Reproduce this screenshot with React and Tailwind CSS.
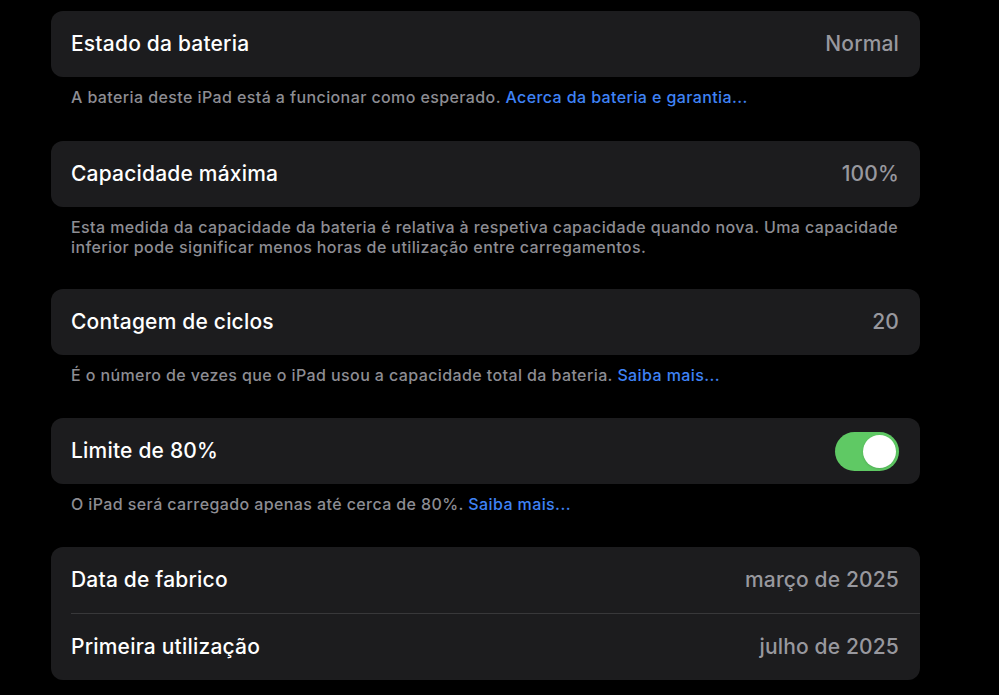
import React from 'react';

const Row = ({ label, value, children }) => (
    <div className="flex items-center justify-between h-[66px] pl-5 pr-[21px]">
        <span className="text-[21px] font-medium text-white tracking-[0.2px]">{label}</span>
        {value && <span className="text-[21px] font-medium text-[#98989e] tracking-[0.15px]">{value}</span>}
        {children}
    </div>
);

const Card = ({ children }) => (
    <div className="bg-[#1c1c1e] rounded-xl overflow-hidden">{children}</div>
);

const Footer = ({ children, className = 'mb-[33px]' }) => (
    <p className={`mt-[10px] ${className} px-5 text-[16px] leading-5 font-medium tracking-[0.4px] text-[#8d8d93]`}>{children}</p>
);

const Link = ({ children }) => <span className="text-[#3f83f6]">{children}</span>;

const Toggle = () => (
    <div className="w-[64px] h-[39px] rounded-full bg-[#5fc964] p-[3px] flex justify-end">
        <div className="w-[33px] h-[33px] rounded-full bg-white shadow" />
    </div>
);

export default function App() {
    return (
        <div className="min-h-screen bg-black pt-[11px]" style={{ fontFamily: 'Inter, "Noto Sans", sans-serif' }}>
            <div className="ml-[51px] w-[869px]">
                <Card>
                    <Row label="Estado da bateria" value="Normal" />
                </Card>
                <Footer className="mb-[34px]">
                    A bateria deste iPad está a funcionar como esperado. <Link>Acerca da bateria e garantia...</Link>
                </Footer>

                <Card>
                    <Row label="Capacidade máxima" value="100%" />
                </Card>
                <Footer className="mb-[32px]">
                    Esta medida da capacidade da bateria é relativa à respetiva capacidade quando nova. Uma capacidade inferior pode significar menos horas de utilização entre carregamentos.
                </Footer>

                <Card>
                    <Row label="Contagem de ciclos" value="20" />
                </Card>
                <Footer>
                    É o número de vezes que o iPad usou a capacidade total da bateria. <Link>Saiba mais...</Link>
                </Footer>

                <Card>
                    <Row label="Limite de 80%">
                        <Toggle />
                    </Row>
                </Card>
                <Footer>
                    O iPad será carregado apenas até cerca de 80%. <Link>Saiba mais...</Link>
                </Footer>

                <Card>
                    <Row label="Data de fabrico" value="março de 2025" />
                    <div className="ml-5 h-px bg-[#38383a]" />
                    <Row label="Primeira utilização" value="julho de 2025" />
                </Card>
            </div>
        </div>
    );
}
